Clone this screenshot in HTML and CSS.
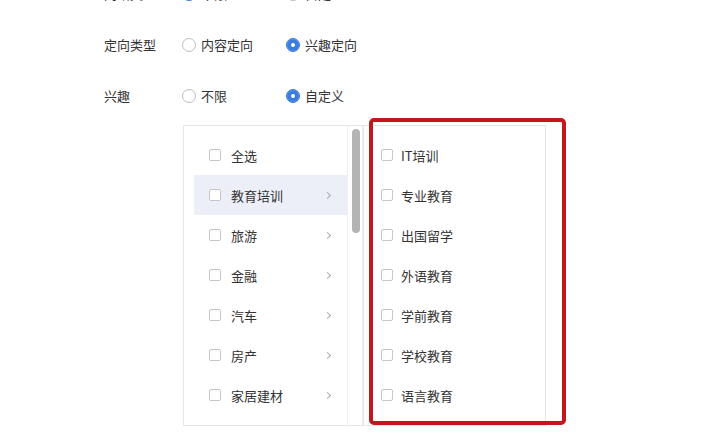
FILE: index.html
```html
<!DOCTYPE html>
<html lang="zh-CN">
<head>
  <meta charset="UTF-8">
  <meta name="viewport" content="width=device-width, initial-scale=1.0">
  <title>定向设置</title>
  <link rel="stylesheet" href="styles.css">
</head>
<body>

  <div class="form">
    <div class="row">
      <span class="label">网络类型</span>
      <label class="radio"><i class="dot on"></i>不限</label>
      <label class="radio"><i class="dot"></i>自定义</label>
    </div>
    <div class="row">
      <span class="label">定向类型</span>
      <label class="radio"><i class="dot"></i>内容定向</label>
      <label class="radio"><i class="dot on"></i>兴趣定向</label>
    </div>
    <div class="row">
      <span class="label">兴趣</span>
      <label class="radio"><i class="dot"></i>不限</label>
      <label class="radio"><i class="dot on"></i>自定义</label>
    </div>

    <div class="picker">
      <div class="panel left">
        <ul class="list">
          <li class="item"><i class="box"></i>全选</li>
          <li class="item active"><i class="box"></i>教育培训<span class="arrow"></span></li>
          <li class="item"><i class="box"></i>旅游<span class="arrow"></span></li>
          <li class="item"><i class="box"></i>金融<span class="arrow"></span></li>
          <li class="item"><i class="box"></i>汽车<span class="arrow"></span></li>
          <li class="item"><i class="box"></i>房产<span class="arrow"></span></li>
          <li class="item"><i class="box"></i>家居建材<span class="arrow"></span></li>
        </ul>
        <div class="track"><div class="thumb"></div></div>
      </div>
      <div class="panel right">
        <ul class="list">
          <li class="item"><i class="box"></i>IT培训</li>
          <li class="item"><i class="box"></i>专业教育</li>
          <li class="item"><i class="box"></i>出国留学</li>
          <li class="item"><i class="box"></i>外语教育</li>
          <li class="item"><i class="box"></i>学前教育</li>
          <li class="item"><i class="box"></i>学校教育</li>
          <li class="item"><i class="box"></i>语言教育</li>
        </ul>
      </div>
      <div class="mark"></div>
    </div>
  </div>

</body>
</html>
```

FILE: styles.css
```css
* { box-sizing: border-box; }
body {
  margin: 0;
  background: #fff;
  font-family: 'Noto Sans CJK SC', 'Noto Sans', sans-serif;
  font-size: 13px;
  color: #333;
  overflow: hidden;
}
.form {
  padding-left: 104px;
  margin-top: -32px;
}
.row {
  display: flex;
  align-items: center;
  height: 51px;
}
.label {
  width: 78px;
}
.radio {
  display: flex;
  align-items: center;
  width: 104px;
}
.dot {
  width: 14px;
  height: 14px;
  border: 1px solid #bdbdbd;
  border-radius: 50%;
  margin-right: 5px;
  background: #fff;
}
.dot.on {
  border-color: #3b7ddd;
  background: #3b7ddd;
  box-shadow: inset 0 0 0 4px #3b7ddd, inset 0 0 0 7px #fff;
}

.picker {
  position: relative;
  display: flex;
  margin: 4px 0 0 79px;
  height: 301px;
}
.panel {
  border: 1px solid #e6e6e6;
  background: #fff;
}
.left {
  display: flex;
  width: 180px;
  border-right: none;
}
.right {
  width: 183px;
}
.list {
  list-style: none;
  margin: 0;
  padding: 9px 0 0;
}
.left .list {
  width: 164px;
  padding-left: 10px;
  border-right: 1px solid #efefef;
}
.right .list {
  padding-left: 17px;
}
.item {
  position: relative;
  display: flex;
  align-items: center;
  height: 40px;
  padding-left: 15px;
}
.right .item {
  padding-left: 0;
}
.item.active {
  background: #edeff8;
}
.box {
  width: 12px;
  height: 12px;
  border: 1px solid #c6c6c6;
  border-radius: 2px;
  background: #fff;
  margin-right: 10px;
}
.right .box {
  margin-right: 8px;
}
.arrow {
  margin-left: auto;
  margin-right: 17px;
  width: 5px;
  height: 5px;
  border-top: 1px solid #aaa;
  border-right: 1px solid #aaa;
  transform: rotate(45deg);
}
.track {
  width: 15px;
  padding: 3px 0 0 4px;
  border-right: 1px solid #efefef;
}
.thumb {
  width: 8px;
  height: 104px;
  border-radius: 4px;
  background: #b4b4b4;
}
.mark {
  position: absolute;
  left: 186px;
  top: -7px;
  width: 197px;
  height: 307px;
  border: 4px solid #c4161c;
  border-radius: 5px;
}
```
